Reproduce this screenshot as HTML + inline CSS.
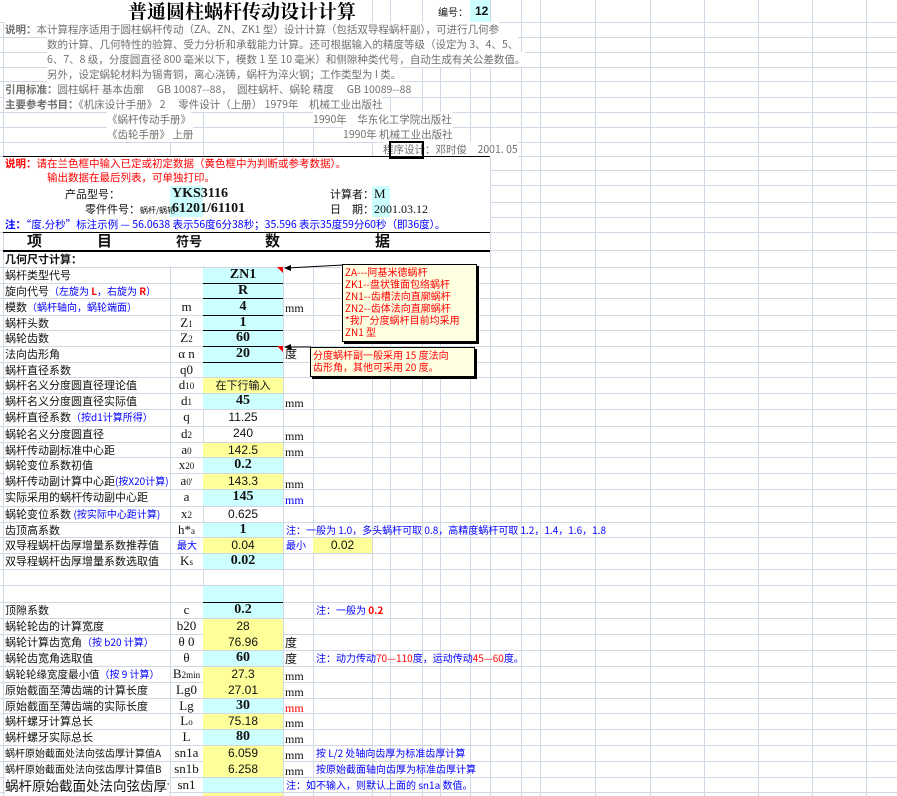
<!DOCTYPE html>
<html><head><meta charset="utf-8">
<style>
html,body{margin:0;padding:0;background:#fff;}
body{width:897px;height:796px;position:relative;overflow:hidden;font-family:"Liberation Sans","Noto Sans CJK SC",sans-serif;}
.v{position:absolute;width:1px;background:#d0d7e5;top:0;height:796px;z-index:1}
.h{position:absolute;height:1px;background:#d0d7e5;left:0;width:897px;z-index:1}
.bg{position:absolute;z-index:2}
.cy{background:#ccffff}.ye{background:#ffff99}.wh{background:#fff}
.t{position:absolute;white-space:nowrap;z-index:3;font-size:11px;line-height:16px;color:#111;font-family:"Noto Sans CJK SC",sans-serif;}
.g{color:#707070;font-size:10.5px;line-height:15px;background:#fff}
.r{color:#ff0000}.b{color:#0000ff}
.s{font-family:"Liberation Serif","Noto Serif CJK SC",serif;font-size:13px;width:33px;left:170px;text-align:center}
.val{left:203px;width:80px;text-align:center;font-family:"Liberation Sans",sans-serif;font-size:12px}
.bold{font-family:"Liberation Serif",serif;font-weight:bold;font-size:14px}
.u{left:285px;font-family:"Liberation Serif",serif;font-size:12px}
.k{position:absolute;height:1px;background:#000;z-index:4}
.sm{font-size:9px}
.box{position:absolute;background:#ffffe1;border:1px solid #000;box-shadow:2px 2px 0 #000;z-index:5;color:#ff0000;font-size:10px;line-height:12px;padding:1px 2px;font-family:"Noto Sans CJK SC",sans-serif;white-space:nowrap}
</style></head><body>
<div id="grid"></div>
<script>
var g=document.getElementById('grid'),h='';
[3,170,203,283,313,372,390,422,440,470,490,521,540,595,650,704,758,812,866].forEach(function(x){h+='<div class="v" style="left:'+x+'px"></div>';});
[22,37,52,67,81,97,112,127,142,156,170,185,202,217,232,250,267,283,298,315,330,346,362,377,393,409,426,442,457,473,489,506,522,537,553,569,585,602,618,634,650,666,682,698,713,729,745,761,777,792].forEach(function(y){h+='<div class="h" style="top:'+y+'px"></div>';});
g.innerHTML=h;
</script>
<div class="bg wh" style="left:0;top:0;width:470px;height:22px"></div>
<div class="bg wh" style="left:0;top:157px;width:490px;height:75px"></div>
<div class="bg wh" style="left:4px;top:233px;width:486px;height:17px"></div>
<div class="bg wh" style="left:4px;top:251px;width:486px;height:15px"></div>
<div class="v" style="left:372px;top:0;height:22px;z-index:2"></div><div class="v" style="left:390px;top:0;height:22px;z-index:2"></div><div class="v" style="left:422px;top:0;height:22px;z-index:2"></div>
<div class="v" style="left:470px;top:0;height:22px;z-index:2"></div>
<div class="bg cy" style="left:470px;top:0;width:20px;height:22px"></div>
<div class="t" style="left:128px;top:0;font-size:19px;font-weight:bold;font-family:'Noto Serif CJK SC',serif;line-height:22px;color:#000">普通圆柱蜗杆传动设计计算</div>
<div class="t" style="left:438px;top:5px;font-size:10px;line-height:14px">编号：</div>
<div class="t" style="left:475px;top:4px;font-size:12px;line-height:14px;font-weight:bold;font-family:'Liberation Sans'">12</div>

<div class="t g" style="left:5px;top:22px"><b>说明：</b>本计算程序适用于圆柱蜗杆传动（ZA、ZN、ZK1 型）设计计算（包括双导程蜗杆副），可进行几何参</div>
<div class="t g" style="left:47px;top:37px">数的计算、几何特性的验算、受力分析和承载能力计算。还可根据输入的精度等级（设定为 3、4、5、</div>
<div class="t g" style="left:47px;top:52px">6、7、8 级，分度圆直径 800 毫米以下，模数 1 至 10 毫米）和侧隙种类代号，自动生成有关公差数值。</div>
<div class="t g" style="left:47px;top:67px">另外，设定蜗轮材料为锡青铜，离心浇铸，蜗杆为淬火钢；工作类型为 I 类。</div>
<div class="t g" style="left:5px;top:82px"><b>引用标准：</b>圆柱蜗杆 基本齿廓　 GB 10087--88，　圆柱蜗杆、蜗轮 精度　 GB 10089--88</div>
<div class="t g" style="left:5px;top:97px"><b>主要参考书目：</b>《机床设计手册》 2　 零件设计（上册） 1979年　机械工业出版社</div>
<div class="t g" style="left:107px;top:112px">《蜗杆传动手册》</div>
<div class="t g" style="left:313px;top:112px">1990年　华东化工学院出版社</div>
<div class="t g" style="left:107px;top:127px">《齿轮手册》 上册</div>
<div class="t g" style="left:343px;top:127px">1990年 机械工业出版社</div>
<div class="t g" style="left:383px;top:142px">程序设计：邓时俊　2001. 05</div>
<div style="position:absolute;left:389px;top:141px;width:31px;height:14px;border:2px solid #000;z-index:6"></div>
<div class="k" style="left:3px;top:156px;width:487px"></div>

<div class="t r" style="left:5px;top:156px;font-size:10.5px;line-height:15px"><b>说明：</b>请在兰色框中输入已定或初定数据（黄色框中为判断或参考数据）。</div>
<div class="t r" style="left:47px;top:170px;font-size:10.5px;line-height:15px">输出数据在最后列表，可单独打印。</div>
<div class="bg cy" style="left:170px;top:186px;width:33px;height:31px"></div>
<div class="bg cy" style="left:372px;top:186px;width:18px;height:31px"></div>
<div class="t" style="left:65px;top:186px;line-height:17px">产品型号：</div>
<div class="t bold" style="left:172px;top:185px;line-height:17px">YKS3116</div>
<div class="t" style="left:330px;top:186px;line-height:17px">计算者：</div>
<div class="t" style="left:374px;top:185px;line-height:17px;font-family:'Liberation Serif';font-size:13px">M</div>
<div class="t" style="left:85px;top:202px;line-height:15px">零件件号：<span style="font-size:8px">蜗杆/蜗轮</span></div>
<div class="t bold" style="left:172px;top:201px;line-height:16px">61201/61101</div>
<div class="t" style="left:330px;top:202px;line-height:15px">日　期：</div>
<div class="t" style="left:374px;top:202px;line-height:15px;font-family:'Liberation Serif';font-size:12px">2001.03.12</div>
<div class="t b" style="left:5px;top:217px;font-size:10.5px;line-height:15px"><b>注：</b>“度.分秒”标注示例 — 56.0638 表示56度6分38秒；35.596 表示35度59分60秒（即36度）。</div>
<div class="k" style="left:3px;top:232px;width:487px"></div>
<div class="t" style="left:27px;top:232px;font-size:15px;font-weight:bold;line-height:18px">项</div>
<div class="t" style="left:97px;top:232px;font-size:15px;font-weight:bold;line-height:18px">目</div>
<div class="t" style="left:176px;top:232px;font-size:13px;font-weight:bold;line-height:18px">符号</div>
<div class="t" style="left:265px;top:232px;font-size:15px;font-weight:bold;line-height:18px">数</div>
<div class="t" style="left:375px;top:232px;font-size:15px;font-weight:bold;line-height:18px">据</div>
<div class="k" style="left:3px;top:250px;width:487px;height:2px"></div>
<div class="t" style="left:5px;top:251px;font-weight:bold;font-size:11px">几何尺寸计算：</div>

<div class="bg cy" style="left:203px;top:268px;width:80px;height:109px"></div>
<div class="bg ye" style="left:203px;top:378px;width:80px;height:15px"></div>
<div class="bg cy" style="left:203px;top:394px;width:80px;height:15px"></div>
<div class="bg ye" style="left:203px;top:443px;width:80px;height:14px"></div>
<div class="bg cy" style="left:203px;top:458px;width:80px;height:15px"></div>
<div class="bg ye" style="left:203px;top:474px;width:80px;height:15px"></div>
<div class="bg cy" style="left:203px;top:490px;width:80px;height:16px"></div>
<div class="bg cy" style="left:203px;top:523px;width:80px;height:14px"></div>
<div class="bg ye" style="left:203px;top:538px;width:80px;height:15px"></div>
<div class="bg ye" style="left:313px;top:538px;width:59px;height:15px"></div>
<div class="bg cy" style="left:203px;top:554px;width:80px;height:15px"></div>
<div class="bg cy" style="left:203px;top:586px;width:80px;height:32px"></div>
<div class="bg ye" style="left:203px;top:619px;width:80px;height:31px"></div>
<div class="bg cy" style="left:203px;top:651px;width:80px;height:15px"></div>
<div class="bg ye" style="left:203px;top:667px;width:80px;height:31px"></div>
<div class="bg cy" style="left:203px;top:699px;width:80px;height:14px"></div>
<div class="bg ye" style="left:203px;top:714px;width:80px;height:15px"></div>
<div class="bg cy" style="left:203px;top:730px;width:80px;height:15px"></div>
<div class="bg ye" style="left:203px;top:746px;width:80px;height:31px"></div>
<div class="bg cy" style="left:203px;top:778px;width:80px;height:14px"></div>
<div class="bg ye" style="left:203px;top:793px;width:80px;height:3px"></div>
<div class="k" style="left:203px;top:283px;width:80px"></div>
<div class="k" style="left:203px;top:298px;width:80px"></div>
<div class="k" style="left:203px;top:315px;width:80px"></div>
<div class="k" style="left:203px;top:330px;width:80px"></div>
<div class="k" style="left:203px;top:346px;width:80px"></div>
<div class="k" style="left:203px;top:362px;width:80px"></div>
<div class="k" style="left:203px;top:602px;width:80px"></div>

<div class="t" style="left:5px;top:267px">蜗杆类型代号</div><div class="t val bold" style="top:267px">ZN1</div>
<div class="t" style="left:5px;top:283px">旋向代号<span class="b" style="font-size:10px">（左旋为 <b class="r">L</b>，右旋为 <b class="r">R</b>）</span></div><div class="t val bold" style="top:283px">R</div>
<div class="t" style="left:5px;top:299px">模数<span class="b" style="font-size:10px">（蜗杆轴向，蜗轮端面）</span></div><div class="t s" style="top:299px">m</div><div class="t val bold" style="top:299px">4</div><div class="t u" style="top:300px">mm</div>
<div class="t" style="left:5px;top:315px">蜗杆头数</div><div class="t s" style="top:315px">Z<span class="sm">1</span></div><div class="t val bold" style="top:315px">1</div>
<div class="t" style="left:5px;top:330px">蜗轮齿数</div><div class="t s" style="top:330px">Z<span class="sm">2</span></div><div class="t val bold" style="top:330px">60</div>
<div class="t" style="left:5px;top:346px">法向齿形角</div><div class="t s" style="top:346px">α n</div><div class="t val bold" style="top:346px">20</div><div class="t" style="left:285px;top:346px;font-size:12px">度</div>
<div class="t" style="left:5px;top:362px">蜗杆直径系数</div><div class="t s" style="top:362px">q0</div>
<div class="t" style="left:5px;top:377px">蜗杆名义分度圆直径理论值</div><div class="t s" style="top:377px">d<span class="sm">10</span></div><div class="t val" style="top:377px;font-family:'Noto Sans CJK SC';font-size:11px">在下行输入</div>
<div class="t" style="left:5px;top:393px">蜗杆名义分度圆直径实际值</div><div class="t s" style="top:393px">d<span class="sm">1</span></div><div class="t val bold" style="top:393px">45</div><div class="t u" style="top:395px">mm</div>
<div class="t" style="left:5px;top:409px">蜗杆直径系数<span class="b" style="font-size:10px">（按d1计算所得）</span></div><div class="t s" style="top:409px">q</div><div class="t val" style="top:409px">11.25</div>
<div class="t" style="left:5px;top:426px">蜗轮名义分度圆直径</div><div class="t s" style="top:426px">d<span class="sm">2</span></div><div class="t val" style="top:425px">240</div><div class="t u" style="top:428px">mm</div>
<div class="t" style="left:5px;top:442px">蜗杆传动副标准中心距</div><div class="t s" style="top:442px">a<span class="sm">0</span></div><div class="t val" style="top:442px">142.5</div><div class="t u" style="top:444px">mm</div>
<div class="t" style="left:5px;top:457px">蜗轮变位系数初值</div><div class="t s" style="top:457px">x<span class="sm">20</span></div><div class="t val bold" style="top:457px">0.2</div>
<div class="t" style="left:5px;top:473px;background:#fff;width:164px;overflow:hidden">蜗杆传动副计算中心距<span class="b" style="font-size:10px">(按X20计算)</span></div><div class="t s" style="top:473px">a<span class="sm">0'</span></div><div class="t val" style="top:473px">143.3</div><div class="t u" style="top:476px">mm</div>
<div class="t" style="left:5px;top:489px">实际采用的蜗杆传动副中心距</div><div class="t s" style="top:489px">a</div><div class="t val bold" style="top:489px">145</div><div class="t u b" style="top:492px">mm</div>
<div class="t" style="left:5px;top:506px">蜗轮变位系数 <span class="b" style="font-size:10px">(按实际中心距计算)</span></div><div class="t s" style="top:506px">x<span class="sm">2</span></div><div class="t val" style="top:506px">0.625</div>
<div class="t" style="left:5px;top:522px">齿顶高系数</div><div class="t s" style="top:522px">h*<span class="sm">a</span></div><div class="t val bold" style="top:522px">1</div>
<div class="t b" style="left:286px;top:522px;font-size:10px">注：一般为 1.0，多头蜗杆可取 0.8，高精度蜗杆可取 1.2，1.4，1.6，1.8</div>
<div class="t" style="left:5px;top:537px">双导程蜗杆齿厚增量系数推荐值</div><div class="t b" style="left:177px;top:537px;font-size:10px">最大</div><div class="t val" style="top:537px">0.04</div><div class="t b" style="left:286px;top:537px;font-size:10px">最小</div><div class="t" style="left:313px;top:537px;width:59px;text-align:center;font-family:'Liberation Sans';font-size:12px">0.02</div>
<div class="t" style="left:5px;top:553px">双导程蜗杆齿厚增量系数选取值</div><div class="t s" style="top:553px">K<span class="sm">s</span></div><div class="t val bold" style="top:553px">0.02</div>
<div class="t" style="left:5px;top:602px">顶隙系数</div><div class="t s" style="top:602px">c</div><div class="t val bold" style="top:602px">0.2</div>
<div class="t b" style="left:316px;top:602px;font-size:10px">注：一般为 <b class="r">0.2</b></div>
<div class="t" style="left:5px;top:618px">蜗轮轮齿的计算宽度</div><div class="t s" style="top:618px">b20</div><div class="t val" style="top:618px">28</div>
<div class="t" style="left:5px;top:634px">蜗轮计算齿宽角<span class="b" style="font-size:10px">（按 b20 计算）</span></div><div class="t s" style="top:634px">θ 0</div><div class="t val" style="top:634px">76.96</div><div class="t" style="left:285px;top:635px;font-size:12px">度</div>
<div class="t" style="left:5px;top:650px">蜗轮齿宽角选取值</div><div class="t s" style="top:650px">θ</div><div class="t val bold" style="top:650px">60</div><div class="t" style="left:285px;top:651px;font-size:12px">度</div>
<div class="t b" style="left:316px;top:650px;font-size:10px">注：动力传动<span class="r">70—110</span>度，运动传动<span class="r">45—60</span>度。</div>
<div class="t" style="left:5px;top:666px;font-size:10.5px">蜗轮轮缘宽度最小值<span class="b" style="font-size:10px">（按 9 计算）</span></div><div class="t s" style="top:666px">B<span class="sm">2min</span></div><div class="t val" style="top:666px">27.3</div><div class="t u" style="top:668px">mm</div>
<div class="t" style="left:5px;top:682px">原始截面至薄齿端的计算长度</div><div class="t s" style="top:682px">Lg0</div><div class="t val" style="top:682px">27.01</div><div class="t u" style="top:684px">mm</div>
<div class="t" style="left:5px;top:698px">原始截面至薄齿端的实际长度</div><div class="t s" style="top:698px">Lg</div><div class="t val bold" style="top:698px">30</div><div class="t u r" style="top:700px">mm</div>
<div class="t" style="left:5px;top:713px">蜗杆螺牙计算总长</div><div class="t s" style="top:713px">L<span class="sm">o</span></div><div class="t val" style="top:713px">75.18</div><div class="t u" style="top:715px">mm</div>
<div class="t" style="left:5px;top:729px">蜗杆螺牙实际总长</div><div class="t s" style="top:729px">L</div><div class="t val bold" style="top:729px">80</div><div class="t u" style="top:731px">mm</div>
<div class="t" style="left:5px;top:745px;font-size:10px">蜗杆原始截面处法向弦齿厚计算值A</div><div class="t s" style="top:745px">sn1a</div><div class="t val" style="top:745px">6.059</div><div class="t u" style="top:747px">mm</div><div class="t b" style="left:316px;top:745px;font-size:10px">按 L/2 处轴向齿厚为标准齿厚计算</div>
<div class="t" style="left:5px;top:761px;font-size:10px">蜗杆原始截面处法向弦齿厚计算值B</div><div class="t s" style="top:761px">sn1b</div><div class="t val" style="top:761px">6.258</div><div class="t u" style="top:763px">mm</div><div class="t b" style="left:316px;top:761px;font-size:10px">按原始截面轴向齿厚为标准齿厚计算</div>
<div class="t" style="left:5px;top:777px;font-size:13.5px;background:#fff;width:164px;overflow:hidden">蜗杆原始截面处法向弦齿厚设定</div><div class="t s" style="top:777px">sn1</div><div class="t b" style="left:286px;top:777px;font-size:10px">注：如不输入，则默认上面的 sn1a 数值。</div>

<svg style="position:absolute;left:0;top:0;z-index:5" width="897" height="796">
<polygon points="277,267 283,267 283,273" fill="#ff0000"/>
<polygon points="277,346 283,346 283,352" fill="#ff0000"/>
<line x1="343" y1="265" x2="287" y2="268" stroke="#000" stroke-width="1"/>
<polygon points="284,268 291,265 291,271" fill="#000"/>
<line x1="311" y1="347" x2="287" y2="347" stroke="#000" stroke-width="1"/>
<polygon points="284,347 291,344 291,350" fill="#000"/>
</svg>
<div class="box" style="left:342px;top:264px;width:129px;height:74px">ZA---阿基米德蜗杆<br>ZK1--盘状锥面包络蜗杆<br>ZN1--齿槽法向直廓蜗杆<br>ZN2--齿体法向直廓蜗杆<br>*我厂分度蜗杆目前均采用<br>ZN1 型</div>
<div class="box" style="left:310px;top:347px;width:159px;height:26px">分度蜗杆副一般采用 15 度法向<br>齿形角，其他可采用 20 度。</div>
</body></html>
